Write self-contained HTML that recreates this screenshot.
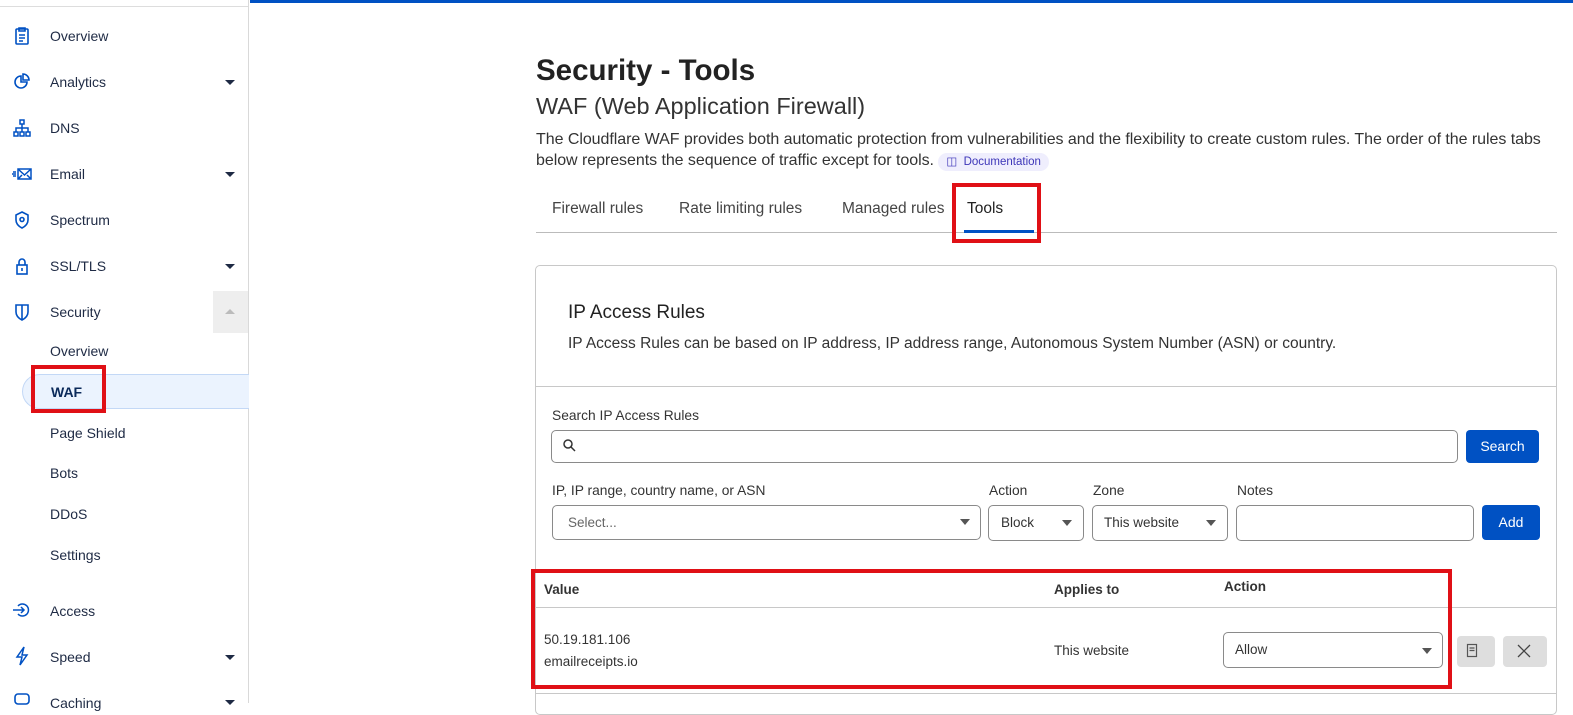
<!DOCTYPE html>
<html><head><style>
*{box-sizing:border-box;margin:0;padding:0}
body{width:1573px;height:703px;overflow:hidden;background:#fff;font-family:"Liberation Sans",sans-serif;color:#313131;position:relative}
.a{position:absolute}
.side{left:0;top:0;width:249px;height:703px;border-right:1px solid #d9d9d9}
.nav{position:absolute;left:50px;font-size:14px;color:#1e2a44}
.ic{position:absolute;left:12px;width:20px;height:20px}
.car{position:absolute;left:225px;width:0;height:0;border-left:5px solid transparent;border-right:5px solid transparent;border-top:5px solid #1e2a44}
.sub{position:absolute;left:50px;font-size:14px;color:#1e2a44}
.red{position:absolute;border:4px solid #e01016}
.inp{position:absolute;border:1px solid #8a8a8a;border-radius:5px;background:#fff}
.dd{position:absolute;width:0;height:0;border-left:5px solid transparent;border-right:5px solid transparent;border-top:6px solid #555}
.btn{position:absolute;background:#0051c3;color:#fff;border-radius:4px;font-size:14px;text-align:center}
.lab{position:absolute;font-size:13.8px;color:#333}
</style></head><body>
<div class="a side"></div>
<div class="a" style="left:0;top:6px;width:248px;height:1px;background:#ddd"></div>
<div class="a" style="left:250px;top:0;width:1323px;height:3px;background:#0051c3"></div>

<svg class="ic" style="top:26px" viewBox="0 0 20 20" fill="none" stroke="#0051c3" stroke-width="1.6"><rect x="4" y="3" width="12" height="15" rx="1"/><path d="M7 2h6v3H7zM7 9h6M7 12h6M7 15h4"/></svg>
<div class="nav" style="top:28px">Overview</div>
<svg class="ic" style="top:72px" viewBox="0 0 20 20" fill="none" stroke="#0051c3" stroke-width="1.6"><path d="M9 4a6 6 0 1 0 6 6H9z"/><path d="M11 2a6 6 0 0 1 6 6h-6z"/></svg>
<div class="nav" style="top:74px">Analytics</div><div class="car" style="top:80px"></div>
<svg class="ic" style="top:118px" viewBox="0 0 20 20" fill="none" stroke="#0051c3" stroke-width="1.5"><rect x="8" y="2" width="4" height="4"/><rect x="2" y="14" width="4" height="4"/><rect x="8" y="14" width="4" height="4"/><rect x="14" y="14" width="4" height="4"/><path d="M10 6v8M4 14v-4h12v4"/></svg>
<div class="nav" style="top:120px">DNS</div>
<svg class="ic" style="top:164px" viewBox="0 0 20 20" fill="none" stroke="#0051c3" stroke-width="1.5"><rect x="6" y="5" width="13" height="10"/><path d="M6 5l6.5 6L19 5M6 15l4-4M19 15l-4-4M1 8h3M0 10h4M1 12h3"/></svg>
<div class="nav" style="top:166px">Email</div><div class="car" style="top:172px"></div>
<svg class="ic" style="top:210px" viewBox="0 0 20 20" fill="none" stroke="#0051c3" stroke-width="1.6"><path d="M10 2l6 3v5c0 4-3 6.5-6 8-3-1.5-6-4-6-8V5z"/><circle cx="10" cy="9.5" r="2"/></svg>
<div class="nav" style="top:212px">Spectrum</div>
<svg class="ic" style="top:256px" viewBox="0 0 20 20" fill="none" stroke="#0051c3" stroke-width="1.6"><rect x="5" y="9" width="10" height="9"/><path d="M7 9V6a3 3 0 0 1 6 0v3M10 12v3"/></svg>
<div class="nav" style="top:258px">SSL/TLS</div><div class="car" style="top:264px"></div>
<div class="a" style="left:213px;top:291px;width:35px;height:42px;background:#eee"></div>
<div class="a" style="left:225px;top:309px;width:0;height:0;border-left:5px solid transparent;border-right:5px solid transparent;border-bottom:5px solid #bbb"></div>
<svg class="ic" style="top:302px" viewBox="0 0 20 20" fill="none" stroke="#0051c3" stroke-width="1.6"><path d="M4 3h12v7c0 4-3 6.5-6 8-3-1.5-6-4-6-8z M10 3v15"/></svg>
<div class="nav" style="top:304px">Security</div>
<div class="sub" style="top:343px">Overview</div>
<div class="a" style="left:22px;top:374px;width:227px;height:35px;background:#ebf3fe;border:1px solid #c3d8f6;border-right:none;border-radius:18px 0 0 18px"></div>
<div class="sub" style="top:384px;left:51px;font-weight:bold;color:#0b2a5a">WAF</div>
<div class="red" style="left:31px;top:365px;width:75px;height:48px"></div>
<div class="sub" style="top:425px">Page Shield</div>
<div class="sub" style="top:465px">Bots</div>
<div class="sub" style="top:506px">DDoS</div>
<div class="sub" style="top:547px">Settings</div>
<svg class="ic" style="top:600px" viewBox="0 0 20 20" fill="none" stroke="#0051c3" stroke-width="1.5"><path d="M1 10h11M9 7l3 3-3 3M6 6a6 6 0 1 1 0 8"/></svg>
<div class="nav" style="top:603px">Access</div>
<svg class="ic" style="top:646px" viewBox="0 0 20 20" fill="none" stroke="#0051c3" stroke-width="1.5"><path d="M12 1L5 11h5l-2 8 7-10h-5z"/></svg>
<div class="nav" style="top:649px">Speed</div><div class="car" style="top:655px"></div>
<svg class="ic" style="top:692px" viewBox="0 0 20 20" fill="none" stroke="#0051c3" stroke-width="1.6"><rect x="3" y="2" width="14" height="10" rx="3"/></svg>
<div class="nav" style="top:695px">Caching</div><div class="car" style="top:700px"></div>

<div class="a" style="left:536px;top:54px;font-size:29.5px;font-weight:bold;color:#222">Security - Tools</div>
<div class="a" style="left:536px;top:93px;font-size:23.5px;color:#333">WAF (Web Application Firewall)</div>
<div class="a" style="left:536px;top:129px;font-size:16px;line-height:21px;color:#333;width:1025px;letter-spacing:-0.05px">The Cloudflare WAF provides both automatic protection from vulnerabilities and the flexibility to create custom rules. The order of the rules tabs below represents the sequence of traffic except for tools. <span style="display:inline-block;background:#efeefd;color:#3d36b8;font-size:11.5px;border-radius:10px;padding:1px 8px;line-height:16px;letter-spacing:0">&#9707;&nbsp; Documentation</span></div>

<div class="a" style="left:552px;top:200px;font-size:15.5px;color:#444">Firewall rules</div>
<div class="a" style="left:679px;top:200px;font-size:15.5px;color:#444">Rate limiting rules</div>
<div class="a" style="left:842px;top:200px;font-size:15.5px;color:#444">Managed rules</div>
<div class="a" style="left:967px;top:200px;font-size:15.5px;color:#222">Tools</div>
<div class="a" style="left:536px;top:232px;width:1021px;height:1px;background:#bbb"></div>
<div class="a" style="left:964px;top:230px;width:70px;height:3px;background:#0051c3"></div>
<div class="red" style="left:952px;top:183px;width:89px;height:60px"></div>

<div class="a" style="left:535px;top:265px;width:1022px;height:450px;border:1px solid #c8c8c8;border-radius:5px"></div>
<div class="a" style="left:568px;top:302px;font-size:19px;color:#222">IP Access Rules</div>
<div class="a" style="left:568px;top:335px;font-size:15.5px;color:#333">IP Access Rules can be based on IP address, IP address range, Autonomous System Number (ASN) or country.</div>
<div class="a" style="left:536px;top:386px;width:1020px;height:1px;background:#c8c8c8"></div>

<div class="lab" style="left:552px;top:408px">Search IP Access Rules</div>
<div class="inp" style="left:551px;top:430px;width:907px;height:33px"></div>
<svg class="a" style="left:562px;top:438px" width="16" height="16" viewBox="0 0 16 16" fill="none" stroke="#333" stroke-width="1.5"><circle cx="6" cy="6" r="4"/><path d="M9 9l4 4"/></svg>
<div class="btn" style="left:1466px;top:430px;width:73px;height:33px;line-height:33px">Search</div>

<div class="lab" style="left:552px;top:483px">IP, IP range, country name, or ASN</div>
<div class="lab" style="left:989px;top:483px">Action</div>
<div class="lab" style="left:1093px;top:483px">Zone</div>
<div class="lab" style="left:1237px;top:483px">Notes</div>
<div class="inp" style="left:552px;top:505px;width:429px;height:35px"></div>
<div class="a" style="left:568px;top:515px;font-size:13.5px;color:#666">Select...</div>
<div class="dd" style="left:960px;top:519px"></div>
<div class="inp" style="left:988px;top:505px;width:96px;height:36px"></div>
<div class="a" style="left:1001px;top:515px;font-size:13.5px;color:#333">Block</div>
<div class="dd" style="left:1062px;top:520px"></div>
<div class="inp" style="left:1092px;top:505px;width:136px;height:36px"></div>
<div class="a" style="left:1104px;top:515px;font-size:13.5px;color:#333">This website</div>
<div class="dd" style="left:1206px;top:520px"></div>
<div class="inp" style="left:1236px;top:505px;width:238px;height:36px"></div>
<div class="btn" style="left:1482px;top:505px;width:58px;height:35px;line-height:35px">Add</div>

<div class="a" style="left:544px;top:582px;font-size:13.5px;font-weight:bold;color:#333">Value</div>
<div class="a" style="left:1054px;top:582px;font-size:13.5px;font-weight:bold;color:#333">Applies to</div>
<div class="a" style="left:1224px;top:579px;font-size:13.5px;font-weight:bold;color:#333">Action</div>
<div class="a" style="left:536px;top:607px;width:1020px;height:1px;background:#c8c8c8"></div>
<div class="a" style="left:544px;top:632px;font-size:13.5px;color:#333">50.19.181.106</div>
<div class="a" style="left:544px;top:654px;font-size:13.5px;color:#333">emailreceipts.io</div>
<div class="a" style="left:1054px;top:643px;font-size:13.5px;color:#333">This website</div>
<div class="inp" style="left:1223px;top:632px;width:220px;height:36px"></div>
<div class="a" style="left:1235px;top:642px;font-size:13.5px;color:#333">Allow</div>
<div class="dd" style="left:1422px;top:648px"></div>
<div class="a" style="left:1457px;top:636px;width:38px;height:31px;background:#dedede;border-radius:4px"></div>
<svg class="a" style="left:1466px;top:643px" width="12" height="16" viewBox="0 0 12 16" fill="none" stroke="#555" stroke-width="1.2"><rect x="1.5" y="1.5" width="9" height="12"/><path d="M3.5 5h5M3.5 7.5h5"/></svg>
<div class="a" style="left:1503px;top:636px;width:44px;height:31px;background:#dedede;border-radius:4px"></div>
<svg class="a" style="left:1517px;top:644px" width="14" height="14" viewBox="0 0 14 14" stroke="#444" stroke-width="1.3"><path d="M1 1l12 12M13 1L1 13"/></svg>
<div class="a" style="left:536px;top:693px;width:1020px;height:1px;background:#c8c8c8"></div>
<div class="red" style="left:531px;top:569px;width:921px;height:120px"></div>
</body></html>
